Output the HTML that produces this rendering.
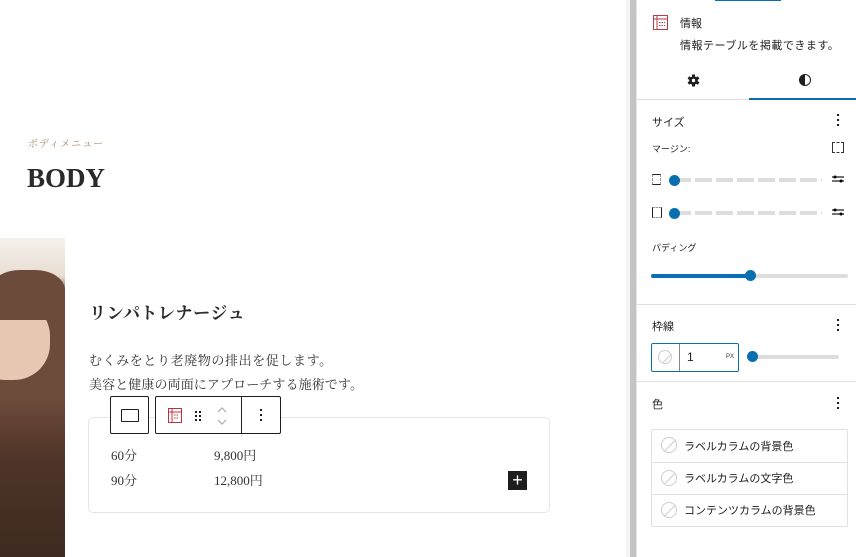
<!DOCTYPE html>
<html><head><meta charset="utf-8"><style>
*{margin:0;padding:0;box-sizing:border-box}
body{width:856px;height:557px;overflow:hidden;background:#fff;position:relative;font-family:"Liberation Sans","Noto Sans CJK JP",sans-serif;color:#1e1e1e}
.a{position:absolute}
.serif{font-family:"Liberation Serif","Noto Serif CJK SC",serif}
.ps{font-size:11px;color:#1e1e1e}
.div{position:absolute;left:637px;width:219px;height:1px;background:#e0e0e0}
.track{position:absolute;height:4px;background:#ddd;border-radius:2px}
.knob{position:absolute;width:11px;height:11px;border-radius:50%;background:#0a6fb0}
.nc{position:absolute;width:16px;height:16px;border-radius:50%;border:1px solid #ccc;overflow:hidden}
.nc:after{content:"";position:absolute;left:7px;top:-2px;width:1px;height:20px;background:#ccc;transform:rotate(45deg)}
</style></head><body>
<div class="a serif" style="left:28px;top:135px;font-size:10px;color:#a78a6e;letter-spacing:1px">ボディメニュー</div>
<div class="a serif" style="left:27px;top:163px;font-size:27px;font-weight:bold;color:#2a2a2a">BODY</div>
<div class="a" style="left:0;top:238px;width:65px;height:319px;background:linear-gradient(180deg,#f4f1ec 0%,#e8ddd2 12%,#6b4a3a 18%,#6e4c3b 50%,#4e3428 70%,#3e2a21 100%)"></div>
<div class="a" style="left:-30px;top:300px;width:80px;height:80px;border-radius:45%;background:#e9c8b3"></div>
<div class="a" style="left:-10px;top:270px;width:75px;height:50px;border-radius:40% 40% 10% 10%;background:#6c4b3b"></div>
<div class="a serif" style="left:89px;top:299px;font-size:17px;font-weight:bold;color:#2a2a2a;letter-spacing:0.6px">リンパトレナージュ</div>
<div class="a serif" style="left:89px;top:349px;font-size:13px;line-height:24px;color:#333;letter-spacing:0.6px">むくみをとり老廃物の排出を促します。<br><span style="letter-spacing:0.1px">美容と健康の両面にアプローチする施術です。</span></div>
<div class="a" style="left:88px;top:417px;width:462px;height:96px;border:1px solid #e6e6e6;border-radius:5px"></div>
<div class="a serif" style="left:111px;top:443px;font-size:13px;line-height:25px;color:#333">60分<br>90分</div>
<div class="a serif" style="left:214px;top:443px;font-size:13px;line-height:25px;color:#333">9,800円<br>12,800円</div>
<div class="a" style="left:508px;top:471px;width:19px;height:19px;background:#1e1e1e;color:#fff;font-size:18px;line-height:18px;text-align:center">+</div>
<div class="a" style="left:110px;top:396px;width:39px;height:38px;border:1px solid #1e1e1e;border-radius:2px;background:#fff"><div class="a" style="left:10px;top:12px;width:18px;height:13px;border:1.3px solid #1e1e1e;border-radius:1px"></div></div>
<div class="a" style="left:155px;top:396px;width:126px;height:38px;border:1px solid #1e1e1e;border-radius:2px;background:#fff">
<svg class="a" style="left:12px;top:11px" width="14" height="15" viewBox="0 0 14 15"><rect x="0.5" y="0.5" width="13" height="14" fill="none" stroke="#c0303c"/><line x1="0" y1="4" x2="14" y2="4" stroke="#c0303c"/><line x1="4" y1="0" x2="4" y2="15" stroke="#c0303c"/><path d="M6 7h5M6 10h5" stroke="#c0303c" stroke-dasharray="1.5 1"/></svg>
<svg class="a" style="left:38px;top:13px" width="8" height="12"><g fill="#1e1e1e"><rect x="1" y="1" width="2" height="2"/><rect x="5" y="1" width="2" height="2"/><rect x="1" y="5" width="2" height="2"/><rect x="5" y="5" width="2" height="2"/><rect x="1" y="9" width="2" height="2"/><rect x="5" y="9" width="2" height="2"/></g></svg>
<svg class="a" style="left:60px;top:9px" width="12" height="20"><path d="M2 6l4-4 4 4M2 14l4 4 4-4" fill="none" stroke="#aaa" stroke-width="1.2"/></svg>
<div class="a" style="left:85px;top:0;width:1px;height:36px;background:#1e1e1e"></div>
<svg class="a" style="left:103px;top:11px" width="4" height="15"><g fill="#1e1e1e"><rect x="1" y="1" width="2" height="2"/><rect x="1" y="6" width="2" height="2"/><rect x="1" y="11" width="2" height="2"/></g></svg>
</div>
<div class="a" style="left:626px;top:0;width:5px;height:557px;background:#f5f5f5"></div>
<div class="a" style="left:630px;top:0;width:6px;height:557px;background:#c4c4c4"></div>
<div class="a" style="left:636px;top:0;width:220px;height:557px;background:#fff;border-left:1px solid #e6e6e6"></div>
<div class="a" style="left:715px;top:0;width:66px;height:1px;background:#0a6fb0"></div>
<svg class="a" style="left:653px;top:15px" width="15" height="15" viewBox="0 0 15 15"><rect x="0.5" y="0.5" width="14" height="14" fill="none" stroke="#b83a48"/><line x1="0" y1="4" x2="15" y2="4" stroke="#b83a48"/><line x1="4" y1="0" x2="4" y2="15" stroke="#b83a48"/><path d="M6 7.5h6M6 10.5h6" stroke="#b83a48" stroke-dasharray="1.5 1"/></svg>
<div class="a ps" style="left:680px;top:15px">情報</div>
<div class="a ps" style="left:680px;top:37px;letter-spacing:0.5px">情報テーブルを掲載できます。</div>
<svg class="a" style="left:687px;top:74px" width="13" height="13" viewBox="0 0 13 13"><g fill="#1e1e1e"><circle cx="6.5" cy="6.5" r="4.3"/><rect x="5" y="0.5" width="3" height="12"/><rect x="5" y="0.5" width="3" height="12" transform="rotate(60 6.5 6.5)"/><rect x="5" y="0.5" width="3" height="12" transform="rotate(120 6.5 6.5)"/></g><circle cx="6.5" cy="6.5" r="1.7" fill="#fff"/></svg>
<div class="a" style="left:799px;top:74px;width:12px;height:12px;border-radius:50%;border:1.5px solid #1e1e1e;background:linear-gradient(90deg,#1e1e1e 50%,#fff 50%)"></div>
<div class="div" style="top:99px"></div>
<div class="a" style="left:749px;top:98px;width:107px;height:2px;background:#0a6fb0"></div>
<div class="a ps" style="left:652px;top:114px">サイズ</div>
<svg class="a" style="left:837px;top:114px" width="3" height="13"><g fill="#1e1e1e"><rect y="0" width="2" height="2"/><rect y="5" width="2" height="2"/><rect y="10" width="2" height="2"/></g></svg>
<div class="a" style="left:652px;top:142px;font-size:9px;color:#1e1e1e">マージン:</div>
<div class="a" style="left:832px;top:142px;width:12px;height:11px;border:1px dashed #333;border-left:1.5px solid #333;border-right:1.5px solid #333"></div>
<div class="a" style="left:652px;top:174px;width:9px;height:11px;border:1px dashed #999;border-top:1.5px solid #222;border-bottom:1.5px solid #222"></div>
<div class="track" style="left:674px;top:178px;width:148px;background:repeating-linear-gradient(90deg,#ddd 0 17px,#fff 17px 21px)"></div>
<div class="knob" style="left:669px;top:175px"></div>
<div class="a" style="left:652px;top:207px;width:10px;height:11px;border:1px dashed #999;border-left:1.5px solid #222;border-right:1.5px solid #222"></div>
<div class="track" style="left:674px;top:211px;width:148px;background:repeating-linear-gradient(90deg,#ddd 0 17px,#fff 17px 21px)"></div>
<div class="knob" style="left:669px;top:208px"></div>
<svg class="a" style="left:831px;top:173px" width="14" height="12"><path d="M1 4h12M1 8h12" stroke="#1e1e1e" stroke-width="1.2"/><circle cx="4" cy="4" r="1.5"/><circle cx="10" cy="8" r="1.5"/></svg>
<svg class="a" style="left:831px;top:206px" width="14" height="12"><path d="M1 4h12M1 8h12" stroke="#1e1e1e" stroke-width="1.2"/><circle cx="4" cy="4" r="1.5"/><circle cx="10" cy="8" r="1.5"/></svg>
<div class="a" style="left:652px;top:241px;font-size:9px">パディング</div>
<div class="track" style="left:651px;top:274px;width:197px"></div>
<div class="track" style="left:651px;top:274px;width:100px;background:#0a6fb0"></div>
<div class="knob" style="left:745px;top:270px"></div>
<div class="div" style="top:304px"></div>
<div class="a ps" style="left:652px;top:318px">枠線</div>
<svg class="a" style="left:837px;top:319px" width="3" height="13"><g fill="#1e1e1e"><rect y="0" width="2" height="2"/><rect y="5" width="2" height="2"/><rect y="10" width="2" height="2"/></g></svg>
<div class="a" style="left:651px;top:343px;width:88px;height:29px;border:1px solid #0a6fb0;border-radius:2px"></div>
<div class="a" style="left:679px;top:344px;width:1px;height:27px;background:#888"></div>
<div class="nc" style="left:658px;top:350px;width:14px;height:14px"></div>
<div class="a" style="left:687px;top:350px;font-size:12px">1</div>
<div class="a" style="left:726px;top:354px;font-size:6px;color:#333">PX</div>
<div class="track" style="left:750px;top:355px;width:89px"></div>
<div class="knob" style="left:747px;top:351px"></div>
<div class="div" style="top:381px"></div>
<div class="a ps" style="left:652px;top:396px">色</div>
<svg class="a" style="left:837px;top:397px" width="3" height="13"><g fill="#1e1e1e"><rect y="0" width="2" height="2"/><rect y="5" width="2" height="2"/><rect y="10" width="2" height="2"/></g></svg>
<div class="a" style="left:651px;top:429px;width:197px;height:98px;border:1px solid #e0e0e0;border-radius:2px"></div>
<div class="a" style="left:652px;top:462px;width:195px;height:1px;background:#e0e0e0"></div>
<div class="a" style="left:652px;top:494px;width:195px;height:1px;background:#e0e0e0"></div>
<div class="nc" style="left:661px;top:437px"></div>
<div class="nc" style="left:661px;top:470px"></div>
<div class="nc" style="left:661px;top:502px"></div>
<div class="a ps" style="left:684px;top:438px">ラベルカラムの背景色</div>
<div class="a ps" style="left:684px;top:470px">ラベルカラムの文字色</div>
<div class="a ps" style="left:684px;top:502px">コンテンツカラムの背景色</div>
</body></html>
